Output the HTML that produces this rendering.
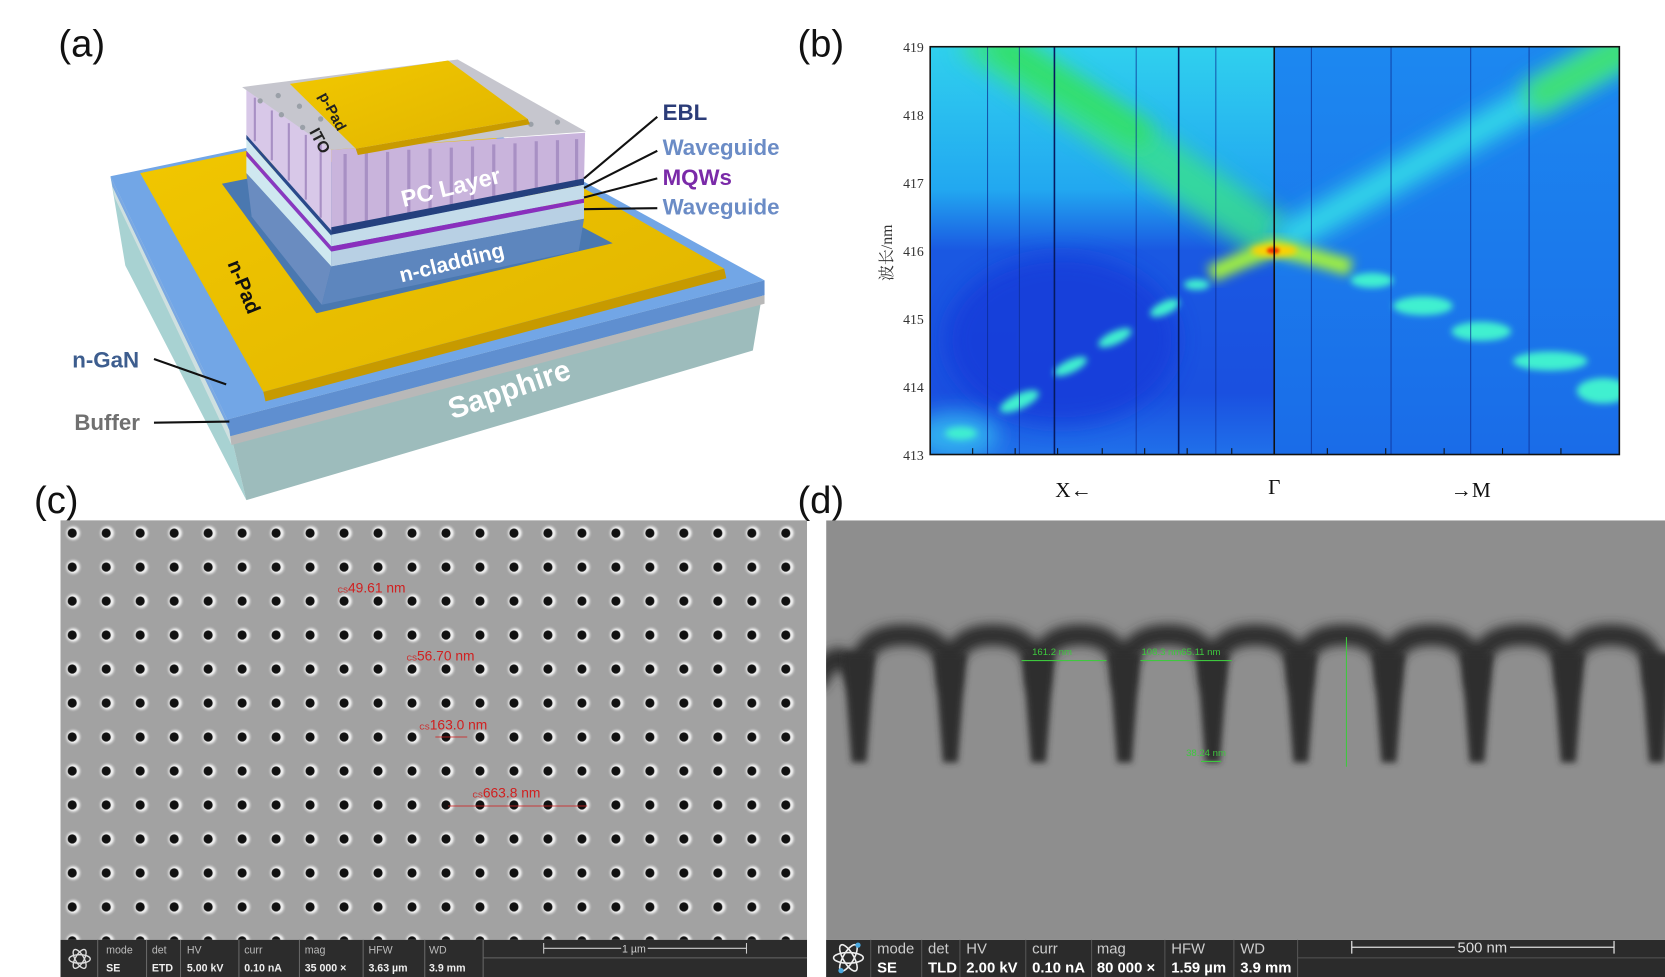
<!DOCTYPE html>
<html><head><meta charset="utf-8"><style>
html,body{margin:0;padding:0;background:#fff;overflow:hidden}
svg{display:block}
</style></head><body>
<svg width="1665" height="977" viewBox="0 0 1568 920" preserveAspectRatio="none" xmlns="http://www.w3.org/2000/svg" font-family="Liberation Sans, sans-serif">
<defs>
<filter id="b10" x="-50%" y="-50%" width="200%" height="200%"><feGaussianBlur stdDeviation="10"/></filter>
<filter id="b5" x="-50%" y="-50%" width="200%" height="200%"><feGaussianBlur stdDeviation="5"/></filter>
<filter id="b3" x="-50%" y="-50%" width="200%" height="200%"><feGaussianBlur stdDeviation="3"/></filter>
<filter id="b2" x="-50%" y="-50%" width="200%" height="200%"><feGaussianBlur stdDeviation="1.6"/></filter>
<linearGradient id="lh" x1="0" y1="0" x2="0" y2="1">
<stop offset="0" stop-color="#30d0ee"/><stop offset="0.35" stop-color="#22a8f0"/><stop offset="0.5" stop-color="#1a58e2"/><stop offset="0.85" stop-color="#1a50e0"/><stop offset="1" stop-color="#2070ea"/></linearGradient>
<linearGradient id="rh" x1="0" y1="0" x2="0" y2="1">
<stop offset="0" stop-color="#1c88f0"/><stop offset="1" stop-color="#1a6ce8"/></linearGradient>
<radialGradient id="halo"><stop offset="0" stop-color="#fff"/><stop offset="0.6" stop-color="#e8e8e8"/><stop offset="1" stop-color="#a0a0a0" stop-opacity="0"/></radialGradient>
<pattern id="dots" x="52" y="486" width="32" height="32" patternUnits="userSpaceOnUse">
<rect width="32" height="32" fill="#a2a2a2"/>
<circle cx="17" cy="16" r="9" fill="url(#halo)"/>
<circle cx="16" cy="16" r="4.3" fill="#111"/>
</pattern>
<linearGradient id="gold" x1="0" y1="0" x2="1" y2="1"><stop offset="0" stop-color="#f2c800"/><stop offset="1" stop-color="#e0b400"/></linearGradient>
</defs>

<g font-size="36" fill="#111">
<text x="55" y="53">(a)</text><text x="751" y="53">(b)</text>
<text x="32" y="483">(c)</text><text x="751" y="483">(d)</text>
</g>

<!-- ===== Panel (a) ===== -->
<polygon points="104,166 214,395 232,471 118,250" fill="#a8d2d2"/>
<polygon points="214,395 720,264 709,330 232,471" fill="#9dbcbc"/>
<polygon points="104,166 214,395 216,405 106,176" fill="#7aa8e2"/>
<polygon points="214,395 720,264 720,278 216,411" fill="#5f8fd0"/>
<polygon points="216,411 720,278 720,286 218,419" fill="#b8b8b8"/>
<polygon points="106,176 216,405 218,419 108,186" fill="#cfe0e0"/>
<polygon points="104,166 420,100 720,264 214,395" fill="#72a6e6"/>
<polygon points="132,163 420,103 682,253 248,369" fill="url(#gold)"/>
<polygon points="248,369 682,253 684,262 250,378" fill="#c79a00"/>
<polygon points="209,173 400,135 577,229 298,295" fill="#4a78b0"/>
<polygon points="232,82 312,141 312,217 232,127" fill="#d8c8e8"/>
<polygon points="232,127 312,217 312,222 232,131" fill="#2a4a8a"/>
<polygon points="232,131 312,222 312,232 232,142" fill="#cfe8f0"/>
<polygon points="232,142 312,232 312,237 232,147" fill="#8a38c0"/>
<polygon points="232,147 312,237 312,251 232,163" fill="#cfe8f0"/>
<polygon points="232,163 312,251 303,287 237,204" fill="#6a8cc0"/>
<polygon points="312,141 551,125 550,171 312,217" fill="#c9b4dc"/>
<g stroke="#a890c4" stroke-width="3">
<line x1="325" y1="145" x2="325" y2="213"/><line x1="345" y1="144" x2="345" y2="209"/><line x1="365" y1="143" x2="365" y2="205"/><line x1="385" y1="141" x2="385" y2="201"/><line x1="405" y1="140" x2="405" y2="197"/><line x1="425" y1="139" x2="425" y2="194"/><line x1="445" y1="138" x2="445" y2="190"/><line x1="465" y1="136" x2="465" y2="186"/><line x1="485" y1="135" x2="485" y2="183"/><line x1="505" y1="133" x2="505" y2="179"/><line x1="525" y1="132" x2="525" y2="176"/><line x1="543" y1="131" x2="543" y2="172"/>
</g>
<g stroke="#a890c4" stroke-width="2"><line x1="240" y1="92" x2="240" y2="133"/><line x1="256" y1="104" x2="256" y2="151"/><line x1="272" y1="116" x2="272" y2="170"/><line x1="288" y1="127" x2="288" y2="188"/><line x1="302" y1="135" x2="302" y2="205"/></g>
<polygon points="312,214 550,168 550,174 312,221" fill="#24407e"/>
<polygon points="312,221 550,174 550,187 312,232" fill="#c4dcea"/>
<polygon points="312,232 550,187 550,191 312,237" fill="#8a2fbd"/>
<polygon points="312,237 550,191 550,206 312,251" fill="#b8d0e4"/>
<polygon points="312,251 550,206 545,236 303,287" fill="#5d86be"/>
<polygon points="228,82 431,56 552,124 312,141" fill="#c6c6ce"/>
<g fill="#9aa0a8">
<circle cx="262" cy="90" r="2.5"/><circle cx="282" cy="100" r="2.5"/><circle cx="302" cy="112" r="2.5"/><circle cx="322" cy="122" r="2.5"/><circle cx="350" cy="130" r="2.5"/><circle cx="380" cy="128" r="2.5"/><circle cx="410" cy="125" r="2.5"/><circle cx="440" cy="122" r="2.5"/><circle cx="470" cy="119" r="2.5"/><circle cx="500" cy="117" r="2.5"/><circle cx="525" cy="115" r="2.5"/><circle cx="245" cy="95" r="2.5"/><circle cx="265" cy="108" r="2.5"/><circle cx="285" cy="120" r="2.5"/>
</g>
<polygon points="335,140 497,112 499,117 337,146" fill="#c89a00"/>
<polygon points="273,79 422,57 497,112 335,140" fill="url(#gold)"/>
<text transform="translate(300,90) rotate(62)" font-size="14" font-weight="bold" fill="#222">p-Pad</text>
<text transform="translate(291,124) rotate(62)" font-size="15" font-weight="bold" fill="#222">ITO</text>
<text transform="translate(380,195) rotate(-14)" font-size="22" font-weight="bold" fill="#fff">PC Layer</text>
<text transform="translate(378,266) rotate(-14)" font-size="20" font-weight="bold" fill="#fff">n-cladding</text>
<text transform="translate(214,248) rotate(68)" font-size="19" font-weight="bold" fill="#111">n-Pad</text>
<text transform="translate(426,395) rotate(-19)" font-size="28" font-weight="bold" fill="#fff">Sapphire</text>
<g font-size="21" font-weight="bold">
<text x="624" y="113" fill="#2b3c78">EBL</text>
<text x="624" y="146" fill="#6b8cc6">Waveguide</text>
<text x="624" y="174" fill="#7a2aa8">MQWs</text>
<text x="624" y="202" fill="#6b8cc6">Waveguide</text>
<text x="68" y="346" fill="#3d5d8e">n-GaN</text>
<text x="70" y="405" fill="#707070">Buffer</text>
</g>
<g stroke="#111" stroke-width="2" fill="none">
<line x1="619" y1="110" x2="550" y2="168"/><line x1="619" y1="142" x2="550" y2="177"/>
<line x1="619" y1="168" x2="550" y2="186"/><line x1="619" y1="196" x2="550" y2="197"/>
<line x1="145" y1="338" x2="213" y2="362"/><line x1="145" y1="398" x2="216" y2="397"/>
</g>

<!-- ===== Panel (b) ===== -->
<svg x="876" y="44" width="649" height="384" viewBox="876 44 649 384" overflow="hidden">
<rect x="876" y="44" width="324" height="384" fill="url(#lh)"/>
<rect x="1200" y="44" width="325" height="384" fill="url(#rh)"/>
<ellipse cx="1000" cy="320" rx="110" ry="80" fill="#1438d8" filter="url(#b10)" opacity="0.7"/>
<ellipse cx="900" cy="410" rx="40" ry="20" fill="#30b0f0" filter="url(#b10)"/>
<line x1="915" y1="30" x2="1200" y2="225" stroke="#38e090" stroke-width="45" filter="url(#b10)" opacity="0.85"/>
<line x1="935" y1="40" x2="1080" y2="130" stroke="#30e060" stroke-width="20" filter="url(#b10)"/>
<line x1="1540" y1="40" x2="1205" y2="228" stroke="#30d8e8" stroke-width="28" filter="url(#b10)"/>
<line x1="1540" y1="40" x2="1440" y2="95" stroke="#40e070" stroke-width="30" filter="url(#b10)"/>
<path d="M1140,258 L1200,232 L1272,252" stroke="#a0f040" stroke-width="16" fill="none" filter="url(#b5)"/>
<ellipse cx="1200" cy="236" rx="22" ry="6" fill="#ffd000" filter="url(#b3)"/>
<ellipse cx="1199" cy="236" rx="6" ry="3" fill="#f03000" filter="url(#b2)"/>
<g fill="#40f0d0" filter="url(#b3)">
<ellipse cx="1127" cy="268" rx="12" ry="5"/><ellipse cx="1097" cy="290" rx="15" ry="6" transform="rotate(-25 1097 290)"/>
<ellipse cx="1050" cy="318" rx="17" ry="6" transform="rotate(-25 1050 318)"/><ellipse cx="1008" cy="345" rx="17" ry="6" transform="rotate(-25 1008 345)"/>
<ellipse cx="960" cy="378" rx="20" ry="7" transform="rotate(-25 960 378)"/><ellipse cx="905" cy="408" rx="15" ry="6"/>
<ellipse cx="1292" cy="264" rx="20" ry="7"/><ellipse cx="1340" cy="288" rx="28" ry="9"/>
<ellipse cx="1395" cy="312" rx="28" ry="9"/><ellipse cx="1460" cy="340" rx="35" ry="9"/><ellipse cx="1510" cy="368" rx="25" ry="12"/>
</g>
<g stroke="#0c2a90" stroke-width="1" opacity="0.7">
<line x1="930" y1="44" x2="930" y2="428"/><line x1="960" y1="44" x2="960" y2="428"/><line x1="1070" y1="44" x2="1070" y2="428"/><line x1="1145" y1="44" x2="1145" y2="428"/><line x1="1235" y1="44" x2="1235" y2="428"/><line x1="1310" y1="44" x2="1310" y2="428"/><line x1="1385" y1="44" x2="1385" y2="428"/><line x1="1440" y1="44" x2="1440" y2="428"/>
</g>
<g stroke="#061a60" stroke-width="1.5"><line x1="993" y1="44" x2="993" y2="428"/><line x1="1110" y1="44" x2="1110" y2="428"/></g>
</svg>
<rect x="876" y="44" width="649" height="384" fill="none" stroke="#111" stroke-width="1.5"/>
<line x1="1200" y1="44" x2="1200" y2="428" stroke="#111" stroke-width="1.5"/>
<g stroke="#111" stroke-width="1"><line x1="916" y1="428" x2="916" y2="422"/><line x1="956" y1="428" x2="956" y2="422"/><line x1="996" y1="428" x2="996" y2="422"/><line x1="1038" y1="428" x2="1038" y2="422"/><line x1="1078" y1="428" x2="1078" y2="422"/><line x1="1118" y1="428" x2="1118" y2="422"/><line x1="1160" y1="428" x2="1160" y2="422"/><line x1="1250" y1="428" x2="1250" y2="422"/><line x1="1305" y1="428" x2="1305" y2="422"/><line x1="1360" y1="428" x2="1360" y2="422"/><line x1="1415" y1="428" x2="1415" y2="422"/><line x1="1470" y1="428" x2="1470" y2="422"/></g>
<g font-family="Liberation Serif, serif" font-size="13" fill="#333" text-anchor="end">
<text x="870" y="49">419</text><text x="870" y="113">418</text><text x="870" y="177">417</text><text x="870" y="241">416</text><text x="870" y="305">415</text><text x="870" y="369">414</text><text x="870" y="433">413</text>
</g>
<text transform="translate(840,238) rotate(-90)" text-anchor="middle" font-family="Liberation Serif, 'Noto Serif CJK SC', serif" font-size="15" fill="#333">波长/nm</text>
<g font-family="Liberation Serif, serif" font-size="20" fill="#111" text-anchor="middle">
<text x="1011" y="468">X←</text><text x="1200" y="465">Γ</text><text x="1385" y="468">→M</text>
</g>

<!-- ===== Panel (c) ===== -->
<rect x="57" y="490" width="703" height="395" fill="url(#dots)"/>
<g fill="#d02020" font-size="13">
<text x="318" y="558"><tspan font-size="7">CS</tspan>49.61 nm</text>
<text x="383" y="622"><tspan font-size="7">CS</tspan>56.70 nm</text>
<text x="395" y="687"><tspan font-size="7">CS</tspan>163.0 nm</text>
<text x="445" y="751"><tspan font-size="7">CS</tspan>663.8 nm</text>
</g>
<g stroke="#d02020" stroke-width="1" opacity="0.8"><line x1="422" y1="759" x2="553" y2="759"/><line x1="410" y1="694" x2="440" y2="694"/></g>
<rect x="57" y="885" width="703" height="35" fill="#2c2c2c"/>
<g stroke="#666" stroke-width="1"><line x1="92" y1="885" x2="92" y2="920"/><line x1="138" y1="885" x2="138" y2="920"/><line x1="170" y1="885" x2="170" y2="920"/><line x1="225" y1="885" x2="225" y2="920"/><line x1="282" y1="885" x2="282" y2="920"/><line x1="342" y1="885" x2="342" y2="920"/><line x1="400" y1="885" x2="400" y2="920"/><line x1="455" y1="885" x2="455" y2="920"/><line x1="455" y1="902" x2="760" y2="902"/></g>
<g fill="#bbb" font-size="10"><text x="100" y="898">mode</text><text x="143" y="898">det</text><text x="176" y="898">HV</text><text x="230" y="898">curr</text><text x="287" y="898">mag</text><text x="347" y="898">HFW</text><text x="404" y="898">WD</text></g>
<g fill="#eee" font-size="10" font-weight="bold"><text x="100" y="915">SE</text><text x="143" y="915">ETD</text><text x="176" y="915">5.00 kV</text><text x="230" y="915">0.10 nA</text><text x="287" y="915">35 000 ×</text><text x="347" y="915">3.63 µm</text><text x="404" y="915">3.9 mm</text></g>
<g stroke="#ccc" stroke-width="1"><line x1="512" y1="893" x2="585" y2="893"/><line x1="610" y1="893" x2="703" y2="893"/><line x1="512" y1="888" x2="512" y2="898"/><line x1="703" y1="888" x2="703" y2="898"/></g>
<text x="597" y="897" fill="#ccc" font-size="10" text-anchor="middle">1 µm</text>
<g stroke="#ddd" fill="none" stroke-width="1.3"><ellipse cx="75" cy="903" rx="10" ry="4"/><ellipse cx="75" cy="903" rx="10" ry="4" transform="rotate(60 75 903)"/><ellipse cx="75" cy="903" rx="10" ry="4" transform="rotate(-60 75 903)"/></g>

<!-- ===== Panel (d) ===== -->
<svg x="778" y="490" width="790" height="395" viewBox="778 490 790 395" overflow="hidden">
<rect x="778" y="490" width="790" height="395" fill="#8e8e8e"/>
<g filter="url(#b5)" stroke="#2e2e2e" stroke-width="20" fill="none" stroke-linecap="round">
<path d="M770,640 Q790,600 808,640"/>
<path d="M808,640 Q808,598 851,598 Q894,598 894,640"/>
<path d="M894,640 Q894,598 935,598 Q977,598 977,640"/>
<path d="M977,640 Q977,598 1017,598 Q1058,598 1058,640"/>
<path d="M1058,640 Q1058,598 1100,598 Q1141,598 1141,640"/>
<path d="M1141,640 Q1141,598 1182,598 Q1224,598 1224,640"/>
<path d="M1224,640 Q1224,598 1265,598 Q1307,598 1307,640"/>
<path d="M1307,640 Q1307,598 1348,598 Q1390,598 1390,640"/>
<path d="M1390,640 Q1390,598 1433,598 Q1476,598 1476,640"/>
<path d="M1476,640 Q1476,598 1517,598 Q1559,598 1559,640"/>
</g>
<g fill="#2e2e2e" filter="url(#b3)">
<path d="M794,615 L824,615 L816,718 L802,718Z"/><path d="M880,615 L910,615 L902,718 L888,718Z"/>
<path d="M963,615 L993,615 L985,718 L971,718Z"/><path d="M1044,615 L1074,615 L1066,718 L1052,718Z"/>
<path d="M1127,615 L1157,615 L1149,718 L1135,718Z"/><path d="M1210,615 L1240,615 L1232,718 L1218,718Z"/>
<path d="M1293,615 L1323,615 L1315,718 L1301,718Z"/><path d="M1376,615 L1406,615 L1398,718 L1384,718Z"/>
<path d="M1462,615 L1492,615 L1484,718 L1470,718Z"/><path d="M1545,615 L1575,615 L1567,718 L1553,718Z"/>
</g>
</svg>
<g fill="#3ec83e" font-size="9"><text x="972" y="617">161.2 nm</text><text x="1075" y="617">108.3 nm65.11 nm</text><text x="1117" y="712">38.24 nm</text></g>
<g stroke="#3ec83e" stroke-width="1"><line x1="962" y1="622" x2="1042" y2="622"/><line x1="1074" y1="622" x2="1160" y2="622"/><line x1="1268" y1="600" x2="1268" y2="722"/><line x1="1131" y1="717" x2="1150" y2="717"/></g>
<rect x="778" y="885" width="790" height="35" fill="#2b2b2b"/>
<g stroke="#555" stroke-width="1"><line x1="820" y1="885" x2="820" y2="920"/><line x1="868" y1="885" x2="868" y2="920"/><line x1="904" y1="885" x2="904" y2="920"/><line x1="966" y1="885" x2="966" y2="920"/><line x1="1028" y1="885" x2="1028" y2="920"/><line x1="1097" y1="885" x2="1097" y2="920"/><line x1="1162" y1="885" x2="1162" y2="920"/><line x1="1222" y1="885" x2="1222" y2="920"/><line x1="1222" y1="902" x2="1568" y2="902"/></g>
<g fill="#ccc" font-size="14"><text x="826" y="898">mode</text><text x="874" y="898">det</text><text x="910" y="898">HV</text><text x="972" y="898">curr</text><text x="1033" y="898">mag</text><text x="1103" y="898">HFW</text><text x="1168" y="898">WD</text></g>
<g fill="#fff" font-size="14" font-weight="bold"><text x="826" y="916">SE</text><text x="874" y="916">TLD</text><text x="910" y="916">2.00 kV</text><text x="972" y="916">0.10 nA</text><text x="1033" y="916">80 000 ×</text><text x="1103" y="916">1.59 µm</text><text x="1168" y="916">3.9 mm</text></g>
<g stroke="#ddd" stroke-width="1.2"><line x1="1273" y1="892" x2="1370" y2="892"/><line x1="1422" y1="892" x2="1520" y2="892"/><line x1="1273" y1="886" x2="1273" y2="898"/><line x1="1520" y1="886" x2="1520" y2="898"/></g>
<text x="1396" y="897" fill="#ddd" font-size="14" text-anchor="middle">500 nm</text>
<g stroke="#eee" fill="none" stroke-width="1.5"><ellipse cx="799" cy="902" rx="14" ry="5"/><ellipse cx="799" cy="902" rx="14" ry="5" transform="rotate(60 799 902)"/><ellipse cx="799" cy="902" rx="14" ry="5" transform="rotate(-60 799 902)"/></g>
<circle cx="808" cy="890" r="2.5" fill="#4aa8e0"/><circle cx="792" cy="914" r="2.5" fill="#4aa8e0"/>
</svg>
</body></html>
